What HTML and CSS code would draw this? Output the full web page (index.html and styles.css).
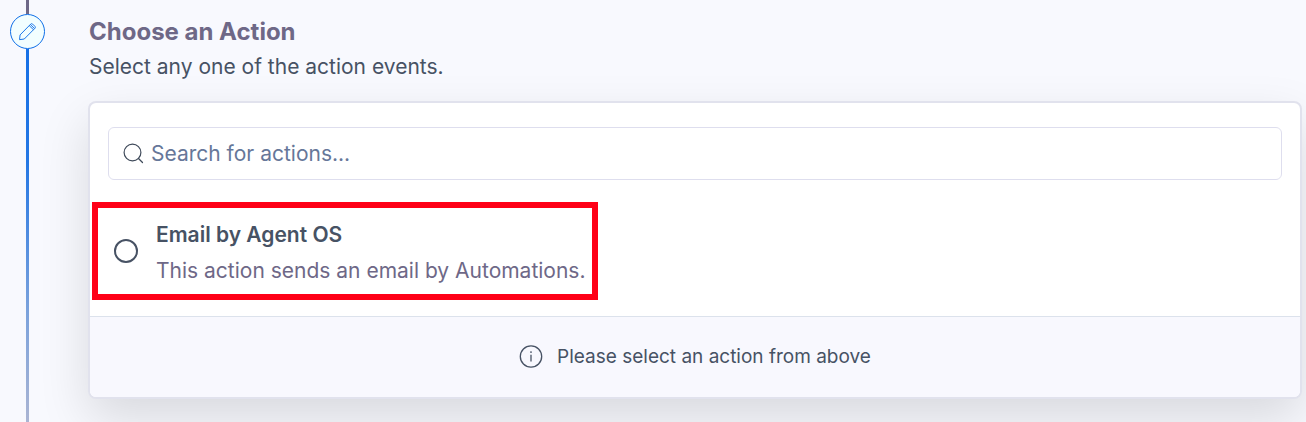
FILE: index.html
```html
<!DOCTYPE html>
<html lang="en">
<head>
    <meta charset="UTF-8">
    <meta name="viewport" content="width=device-width, initial-scale=1.0">
    <title>Choose an Action</title>
    <link rel="stylesheet" href="styles.css">
</head>
<body>
    <main class="step">
        <!-- Timeline -->
        <div class="rail">
            <span class="rail-before"></span>
            <span class="rail-badge">
                <svg width="19" height="19" viewBox="0 0 20 20" fill="none" stroke="#0f6fe8" stroke-width="1" stroke-linejoin="round" aria-hidden="true">
                    <path d="M1.6 18.6 L2.2 13.6 L13.4 2.2 Q14.4 1.2 15.4 2.2 L17.9 4.7 Q18.7 5.6 17.8 6.6 L6.6 17.9 Z"/>
                    <path d="M11.8 3.8 L16.3 8.1 M13 2.6 L17.4 6.9"/>
                </svg>
            </span>
            <span class="rail-after"></span>
        </div>

        <div class="content">
            <div class="heading">
                <h1 class="title">Choose an Action</h1>
                <p class="subtitle">Select any one of the action events.</p>
            </div>

            <!-- Action Picker -->
            <section class="card">
                <div class="search-wrap">
                    <label class="search">
                        <svg width="22" height="22" viewBox="0 0 22 22" fill="none" stroke="#3f4a5a" stroke-width="1.2" stroke-linecap="round" aria-hidden="true">
                            <circle cx="9.5" cy="9.5" r="8.4"/>
                            <path d="M15.5 15.5 L19.5 19.5"/>
                        </svg>
                        <input class="search-input" type="text" placeholder="Search for actions..." aria-label="Search for actions">
                    </label>
                </div>

                <label class="option">
                    <input class="option-radio" type="radio" name="action">
                    <span class="option-text">
                        <span class="option-name">Email by Agent OS</span>
                        <span class="option-desc">This action sends an email by Automations.</span>
                    </span>
                </label>

                <div class="card-footer">
                    <svg width="24" height="24" viewBox="0 0 24 24" fill="none" stroke="#475264" stroke-width="1.3" aria-hidden="true">
                        <circle cx="12" cy="11.5" r="10.7"/>
                        <path d="M12 9.7 V16.5"/>
                        <circle cx="12" cy="7.1" r="0.9" fill="#475264" stroke="none"/>
                    </svg>
                    <span>Please select an action from above</span>
                </div>
            </section>
        </div>
    </main>
</body>
</html>
```
FILE: styles.css
```css
* {
    margin: 0;
    padding: 0;
    box-sizing: border-box;
}

body {
    font-family: Inter, "Liberation Sans", sans-serif;
    background: #f8f9fe;
    color: #475264;
    overflow: hidden;
}

.step {
    display: flex;
    gap: 42px;
    min-height: 100vh;
    padding: 0 4px 0 9px;
}

/* ===== TIMELINE ===== */
.rail {
    display: flex;
    flex-direction: column;
    align-items: center;
    width: 37px;
    flex-shrink: 0;
}

.rail-before {
    width: 3px;
    height: 14px;
    background: #6e6887;
}

.rail-badge {
    display: flex;
    align-items: center;
    justify-content: center;
    width: 35px;
    height: 35px;
    border: 1px solid #0f6fe8;
    border-radius: 50%;
    background: #f2feff;
}

.rail-after {
    flex: 1;
    width: 3px;
    background: linear-gradient(#1670e6, #2477e4 30%, #7ba2dc 70%, #abb5d3);
}

/* ===== CONTENT ===== */
.content {
    flex: 1;
    min-width: 0;
    padding: 16px 0 24px;
}

.heading {
    padding: 0 1px 18px;
}

.title {
    font-size: 24px;
    line-height: 32px;
    font-weight: 700;
    color: #6e6887;
}

.subtitle {
    margin-top: 3px;
    font-size: 21px;
    line-height: 32px;
}

.card {
    border: 2px solid #e1e2ed;
    border-radius: 8px;
    background: #fff;
    box-shadow: 0 20px 50px rgba(0, 0, 0, 0.13);
    overflow: hidden;
}

/* ===== SEARCH ===== */
.search-wrap {
    padding: 24px 18px 22px;
}

.search {
    display: flex;
    align-items: center;
    gap: 6px;
    height: 53px;
    padding: 0 14px;
    border: 1px solid #dedeee;
    border-radius: 6px;
}

.search-input {
    flex: 1;
    min-width: 0;
    border: none;
    outline: none;
    background: none;
    font-family: inherit;
    font-size: 21px;
    line-height: 32px;
    color: #475264;
}

.search-input::placeholder {
    color: #667799;
    opacity: 1;
}

/* ===== OPTION ===== */
.option {
    display: flex;
    align-items: center;
    gap: 18px;
    width: fit-content;
    margin: 0 2px 16px;
    padding: 0 6px 0 16px;
    border: 6px solid #ff0017;
}

.option-radio {
    appearance: none;
    flex-shrink: 0;
    width: 24px;
    height: 24px;
    border: 2px solid #475264;
    border-radius: 50%;
}

.option-text {
    display: flex;
    flex-direction: column;
    gap: 4px;
    padding: 11px 0 7px;
}

.option-name,
.option-desc {
    font-size: 21px;
    line-height: 32px;
}

.option-name {
    font-weight: 600;
}

.option-desc {
    color: #6e6887;
}

/* ===== FOOTER ===== */
.card-footer {
    display: flex;
    align-items: center;
    justify-content: center;
    gap: 14px;
    padding: 24px;
    border-top: 1px solid #dce2ec;
    background: #f8f8fe;
    font-size: 19px;
    line-height: 32px;
}
```
